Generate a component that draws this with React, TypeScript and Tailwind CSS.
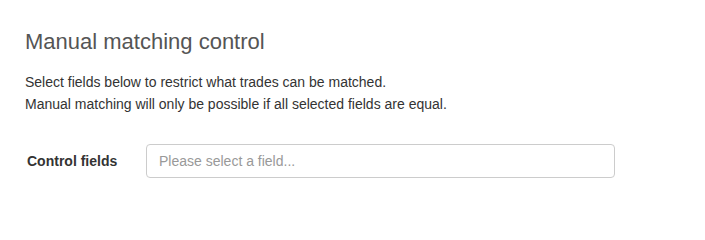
export default function App() {
  return (
    <div className="w-[705px] h-[218px] bg-white pl-[25px] pt-[29px] font-['Liberation_Sans',Arial,sans-serif] text-[#333]">
      {/* Header */}
      <h2 className="text-[22px] leading-[26px] font-normal text-[#555]">Manual matching control</h2>

      {/* Description */}
      <div className="mt-[16px] text-[14px] leading-[22px]">
        <p>Select fields below to restrict what trades can be matched.</p>
        <p>Manual matching will only be possible if all selected fields are equal.</p>
      </div>

      {/* Control fields row */}
      <div className="mt-[29px] flex items-center">
        <label className="w-[121px] pl-[2px] text-[14px] font-bold text-[#333]">Control fields</label>
        <input
          type="text"
          placeholder="Please select a field..."
          className="w-[469px] h-[34px] px-[12px] rounded-[4px] border border-[#ccc] text-[14px] placeholder:text-[#999] outline-none"
        />
      </div>
    </div>
  )
}
